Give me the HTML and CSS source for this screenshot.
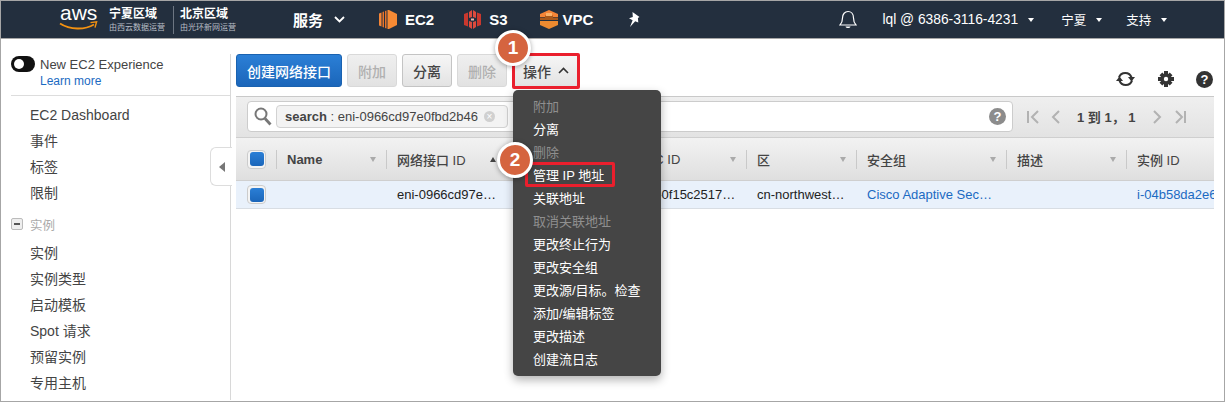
FILE: index.html
```html
<!DOCTYPE html>
<html lang="zh">
<head>
<meta charset="utf-8">
<title>网络接口</title>
<link rel="stylesheet" href="styles.css">
</head>
<body>
<div class="app">
  <header class="nav">
    <div class="logo">
      <span class="logo-text">aws</span>
      <svg class="logo-smile" width="40" height="10" viewBox="0 0 40 10"><path d="M1 2.500C11 9 26 9 35 3.500" fill="none" stroke="#f29111" stroke-width="1.800"/><path d="M31.500 1.600L37.600 .8 36 6.600" fill="none" stroke="#f29111" stroke-width="1.400"/></svg>
    </div>
    <div class="region"><b>宁夏区域</b><small>由西云数据运营</small></div>
    <div class="region region-b"><b>北京区域</b><small>由光环新网运营</small></div>
    <span class="nav-main services">服务</span>
    <svg class="chev" width="11" height="7" viewBox="0 0 11 7"><path d="M1 1l4.500 4.500L10 1" fill="none" stroke="#fff" stroke-width="1.800"/></svg>
    <svg class="svc svc-ec2" width="18" height="19" viewBox="0 0 18 19"><path d="M0 3.500l2.500-1v14l-2.500-1z" fill="#f58536"/><path d="M3.500 2l1.500-.6v16.200l-1.500-.6zM6 1l1.500-.5v18l-1.500-.5z" fill="#e8742a"/><path d="M8.500 0H10l8 4v11l-8 4H8.500z" fill="#f68a34"/></svg>
    <span class="nav-main svc-label">EC2</span>
    <svg class="svc svc-s3" width="17" height="19" viewBox="0 0 17 19"><path d="M0 4l4-1.500v14L0 15zM17 4l-4-1.500v14l4-1.500z" fill="#c9382e"/><path d="M5 2l3-2v7l-3 1zM12 2L9 0v7l3 1zM5 11l3 1v7l-3-2zM12 11l-3 1v7l3-2z" fill="#dc4b3e"/><path d="M7 8.500h3v2H7z" fill="#eab5ac"/></svg>
    <span class="nav-main svc-label">S3</span>
    <svg class="svc svc-vpc" width="18" height="19" viewBox="0 0 18 19"><path d="M9 0l9 4v3H0V4z" fill="#f58536"/><path d="M0 7.500h5V5.500h8v2h5v2.500H0z" fill="#a9591b"/><path d="M0 11h18v4l-9 4-9-4z" fill="#ec8a30"/><path d="M6 3h6v3H6z" fill="#f9b36a"/></svg>
    <span class="nav-main svc-label">VPC</span>
    <svg class="pin" width="14" height="15" viewBox="0 0 14 15"><path d="M4.500 0l7 5-1.600 1 .4 4.500-3.100-1.200L2 15l2.600-6.700L1 6.300 4.800 5z" fill="#fff"/></svg>
    <svg class="bell" width="18" height="19" viewBox="0 0 18 19"><path d="M1 15c2-2 2.500-4 2.500-7C3.500 4 6 1.500 9 1.500S14.500 4 14.500 8c0 3 .5 5 2.500 7z" fill="none" stroke="#fff" stroke-width="1.200"/><path d="M6.500 16.500c.5 2 4.500 2 5 0z" fill="#fff"/></svg>
    <span class="nav-item account">lql @ 6386-3116-4231</span><i class="caret"></i>
    <span class="nav-item region-menu">宁夏</span><i class="caret"></i>
    <span class="nav-item support">支持</span><i class="caret"></i>
  </header>

  <div class="body">
    <aside class="side">
      <div class="exp">
        <span class="toggle"><i></i></span>
        <div class="exp-text">New EC2 Experience<a>Learn more</a></div>
      </div>
      <ul class="side-list">
        <li>EC2 Dashboard</li>
        <li>事件</li>
        <li>标签</li>
        <li>限制</li>
      </ul>
      <div class="side-group"><span class="minus"><i></i></span>实例</div>
      <ul class="side-list side-list-b">
        <li>实例</li>
        <li>实例类型</li>
        <li>启动模板</li>
        <li>Spot 请求</li>
        <li>预留实例</li>
        <li>专用主机</li>
      </ul>
    </aside>
    <div class="collapse"><i></i></div>

    <main class="main">
      <div class="toolbar">
        <button class="btn primary">创建网络接口</button>
        <button class="btn off">附加</button>
        <button class="btn">分离</button>
        <button class="btn off">删除</button>
        <button class="btn action">操作<svg width="11" height="7" viewBox="0 0 11 7"><path d="M1 6l4.500-4.500L10 6" fill="none" stroke="#333" stroke-width="1.600"/></svg></button>
        <div class="tools">
          <svg width="21" height="18" viewBox="0 0 21 18"><path d="M4 7.500A6.600 6.600 0 0 1 16.500 7.500" fill="none" stroke="#333" stroke-width="2.200"/><path d="M13 7h7l-3.500 4.500z" fill="#333"/><path d="M17 10.500A6.600 6.600 0 0 1 4.500 10.500" fill="none" stroke="#333" stroke-width="2.200"/><path d="M1 11h7L4.500 6.500z" fill="#333"/></svg>
          <svg width="16" height="16" viewBox="0 0 16 16"><path d="M6 0h4v16H6zM0 6h16v4H0zM1.500 4.300l2.800-2.800 10.200 10.200-2.800 2.800zM11.700 1.500l2.800 2.800L4.300 14.500l-2.800-2.800z" fill="#333"/><circle cx="8" cy="8" r="5.500" fill="#333"/><circle cx="8" cy="8" r="2.200" fill="#fff"/></svg>
          <span class="help dark">?</span>
        </div>
      </div>

      <div class="filter">
        <div class="search">
          <svg width="18" height="19" viewBox="0 0 18 19"><circle cx="7" cy="7" r="5.500" fill="none" stroke="#777" stroke-width="2"/><path d="M11 11.500l5.500 6" stroke="#777" stroke-width="2.800"/></svg>
          <span class="chip"><b>search</b> : eni-0966cd97e0fbd2b46<i class="chip-x">×</i></span>
          <span class="help grey">?</span>
        </div>
        <div class="pager">
          <svg width="42" height="14" viewBox="0 0 42 14"><path d="M1 1v12M11 1L5 7l6 6M32 1l-6 6 6 6" fill="none" stroke="#b2b2b2" stroke-width="2"/></svg>
          <span>1 到 1，&nbsp;1</span>
          <svg width="42" height="14" viewBox="0 0 42 14"><path d="M10 1l6 6-6 6M32 1l6 6-6 6M41 1v12" fill="none" stroke="#b2b2b2" stroke-width="2"/></svg>
        </div>
      </div>

      <div class="grid head">
        <div class="cell check-cell"><span class="check"><i></i></span></div>
        <div class="cell name-cell">Name<i class="sort"></i></div>
        <div class="cell">网络接口 ID<i class="sort up"></i></div>
        <div class="cell"><i class="sort"></i></div>
        <div class="cell">VPC ID<i class="sort"></i></div>
        <div class="cell">区<i class="sort"></i></div>
        <div class="cell">安全组<i class="sort"></i></div>
        <div class="cell">描述<i class="sort"></i></div>
        <div class="cell">实例 ID</div>
      </div>
      <div class="grid row">
        <div class="cell check-cell"><span class="check"><i></i></span></div>
        <div class="cell"></div>
        <div class="cell">eni-0966cd97e…</div>
        <div class="cell"></div>
        <div class="cell">vpc-0f15c2517…</div>
        <div class="cell">cn-northwest…</div>
        <div class="cell link">Cisco Adaptive Sec…</div>
        <div class="cell"></div>
        <div class="cell link">i-04b58da2e6</div>
      </div>
    </main>
  </div>

  <ul class="menu">
    <li class="dim">附加</li>
    <li>分离</li>
    <li class="dim">删除</li>
    <li>管理 IP 地址</li>
    <li>关联地址</li>
    <li class="dim">取消关联地址</li>
    <li>更改终止行为</li>
    <li>更改安全组</li>
    <li>更改源/目标。检查</li>
    <li>添加/编辑标签</li>
    <li>更改描述</li>
    <li>创建流日志</li>
  </ul>
  <div class="mark mark-a"></div>
  <div class="mark mark-b"></div>
  <div class="badge badge-a">1</div>
  <div class="badge badge-b">2</div>
</div>
</body>
</html>
```

FILE: styles.css
```css
* { box-sizing: border-box; }
html, body { margin: 0; padding: 0; }
body { width: 1225px; height: 402px; overflow: hidden; background: #fff; font-family: "Liberation Sans", "Noto Sans CJK SC", sans-serif; }
ul { list-style: none; margin: 0; padding: 0; }
i { font-style: normal; }

.app { position: relative; width: 1225px; height: 402px; border: 1px solid #a6a6a6; overflow: hidden; }

.nav { display: flex; align-items: center; height: 37px; background: #232f3e; color: #fff; padding-left: 58px; }
.logo { position: relative; width: 40px; height: 37px; flex: none; }
.logo-text { display: block; font-size: 21px; line-height: 22px; margin-top: 1px; padding-left: 1px; }
.logo-smile { position: absolute; left: 0; top: 20px; }
.region { width: 64px; margin-left: 10px; padding-top: 1px; display: flex; flex-direction: column; flex: none; }
.region b { font-size: 12px; line-height: 15px; font-weight: 700; white-space: nowrap; }
.region small { font-size: 8px; line-height: 12px; color: #b8bec6; white-space: nowrap; }
.region-b { border-left: 1px solid #6d7682; padding-left: 6px; margin-left: 0; width: 70px; }
.nav-main { font-size: 15px; font-weight: 700; }
.services { margin-left: 50px; }
.chev { margin-left: 11px; }
.svc { flex: none; }
.svc-ec2 { margin-left: 34px; }
.svc-s3 { margin-left: 30px; }
.svc-vpc { margin-left: 32px; }
.svc-label { margin-left: 8px; }
.svc-vpc + .svc-label { margin-left: 5px; }
.pin { margin-left: 35px; }
.bell { margin-left: 197px; }
.nav-item { font-size: 13.800px; white-space: nowrap; }
.region-menu, .support { font-size: 12.500px; }
.account { margin-left: 25px; }
.region-menu { margin-left: 27px; }
.support { margin-left: 24px; }
.caret { width: 0; height: 0; margin-left: 10px; border: 3.500px solid transparent; border-top: 4px solid #fff; border-bottom: 0; }

.body { display: flex; height: 362px; border-top: 1px solid #a6a6a6; }
.side { width: 229px; flex: none; margin-top: 15px; padding-left: 10px; color: #444; font-size: 14px; }
.exp { display: flex; height: 42px; border-bottom: 1px solid #ddd; margin-bottom: 6px; }
.toggle { width: 24px; height: 16px; margin-top: 2px; border-radius: 8px; background: #111; flex: none; position: relative; }
.toggle i { position: absolute; left: 3px; top: 3px; width: 10px; height: 10px; border-radius: 50%; background: #fff; }
.exp-text { margin-left: 5px; padding-top: 2px; font-size: 13px; line-height: 17px; white-space: nowrap; }
.exp-text a { display: block; color: #1b6ac2; font-size: 12px; line-height: 17px; }
.side-list { padding-left: 19px; }
.side-list li { height: 26px; line-height: 26px; white-space: nowrap; }
.side-group { display: flex; align-items: center; height: 26px; margin-top: 5px; color: #aaa; font-size: 12.500px; }
.minus { display: flex; align-items: center; justify-content: center; width: 12px; height: 12px; margin-right: 7px; border: 1px solid #bbb; border-radius: 2px; background: #eee; }
.minus i { width: 6px; height: 2px; background: #555; }
.side-list-b { margin-top: 3px; }

.collapse { position: absolute; left: 209px; top: 146px; width: 22px; height: 39px; background: #fff; border: 1px solid #ddd; border-right: 0; border-radius: 6px 0 0 6px; display: flex; align-items: center; justify-content: center; z-index: 2; }
.collapse i { width: 0; height: 0; border: 5.500px solid transparent; border-right: 6px solid #777; border-left: 0; }

.main { flex: 1; min-width: 0; margin-top: 15px; border-left: 1px solid #d8d8d8; padding: 0 10px 0 5px; }
.toolbar { display: flex; gap: 5px; height: 43px; border-bottom: 1px solid #c9c9c9; }
.btn { height: 33px; width: 50px; padding: 0; border: 1px solid #c4c4c4; border-radius: 3px; background: linear-gradient(#f6f6f6, #e3e3e3); color: #444; font: 500 14px "Liberation Sans", "Noto Sans CJK SC", sans-serif; }
.primary { width: 106px; border-color: #1a62b0; background: linear-gradient(#2b7fd6, #1b66ba); color: #fff; }
.off { color: #b0b0b0; border-color: #d9d9d9; background: linear-gradient(#efefef, #e2e2e2); }
.action { width: 66px; margin-left: 1px; display: flex; align-items: center; justify-content: center; gap: 7px; }
.tools { margin-left: auto; margin-right: 1px; margin-top: 15px; display: flex; align-items: center; gap: 22px; height: 20px; }
.help { display: flex; align-items: center; justify-content: center; width: 17px; height: 17px; border-radius: 50%; color: #fff; font-size: 13px; font-weight: 700; }
.dark { background: #333; }
.grey { background: #8c8c8c; }

.filter { display: flex; height: 41px; padding: 4px 0 0 11px; background: linear-gradient(#efefef, #e3e3e3); border-bottom: 1px solid #cfcfcf; }
.search { display: flex; align-items: center; width: 766px; height: 31px; padding: 0 6px; background: #fff; border: 1px solid #ccc; border-radius: 4px; }
.chip { display: flex; align-items: center; width: 232px; height: 23px; margin-left: 4px; padding-left: 8px; border: 1px solid #d2d2d2; border-radius: 4px; background: #f3f3f3; color: #444; font-size: 13px; white-space: pre; }
.chip-x { width: 11px; height: 11px; margin-left: 6px; border-radius: 50%; background: #d0d0d0; color: #fff; font-size: 10px; line-height: 11px; text-align: center; }
.search .help { margin-left: auto; }
.pager { display: flex; align-items: center; height: 31px; margin-left: 14px; color: #444; font-size: 13px; font-weight: 700; gap: 8px; white-space: nowrap; }

.grid { display: grid; grid-template-columns: 40px 110px 120px 120px 120px 110px 150px 120px 88px; overflow: hidden; }
.cell { position: relative; display: flex; align-items: center; padding-left: 11px; white-space: nowrap; overflow: hidden; font-size: 13px; }
.head { height: 43px; background: linear-gradient(#f2f2f2, #dfdfdf); border-bottom: 1px solid #cfcfcf; color: #444; font-weight: 500; }
.head .cell + .cell::before { content: ""; position: absolute; left: 0; top: 12px; width: 1px; height: 19px; background: #c9c9c9; }
.name-cell { font-weight: 700; }
.sort { position: absolute; right: 10px; top: 19px; width: 0; height: 0; border: 3.500px solid transparent; border-top: 5px solid #aaa; border-bottom: 0; }
.sort.up { border-top: 0; border-bottom: 5px solid #444; }
.row { height: 28px; background: #e9f1fb; border-bottom: 1px solid #d8dde3; color: #222; }
.link { color: #1b6ac2; }
.check { display: flex; align-items: center; justify-content: center; width: 19px; height: 19px; border: 1px solid #ccc; border-radius: 4px; background: #f4f4f4; flex: none; }
.check i { width: 14px; height: 14px; border-radius: 3px; background: linear-gradient(#2b7fd6, #1b66ba); }

.menu { position: absolute; left: 512px; top: 89px; width: 148px; height: 286px; padding: 5px 0; background: #454545; border-radius: 5px; box-shadow: 0 4px 10px rgba(0,0,0,.3); z-index: 3; }
.menu li { height: 23px; line-height: 23px; padding-left: 20px; color: #fff; font-size: 13px; white-space: nowrap; }
.menu li.dim { color: #8f8f8f; }

.mark { position: absolute; border: 3px solid #ea1f2d; border-radius: 2px; z-index: 4; }
.mark-a { left: 511px; top: 52px; width: 68px; height: 36px; }
.mark-b { left: 524px; top: 161px; width: 90px; height: 25px; }

.badge { position: absolute; width: 36px; height: 36px; display: flex; align-items: center; justify-content: center; border: 3px solid #fff; border-radius: 50%; background: #d5643f; color: #fff; font-size: 19px; font-weight: 700; box-shadow: 0 1px 5px rgba(0,0,0,.35); z-index: 5; }
.badge-a { left: 494px; top: 29px; }
.badge-b { left: 496px; top: 141px; }
```
